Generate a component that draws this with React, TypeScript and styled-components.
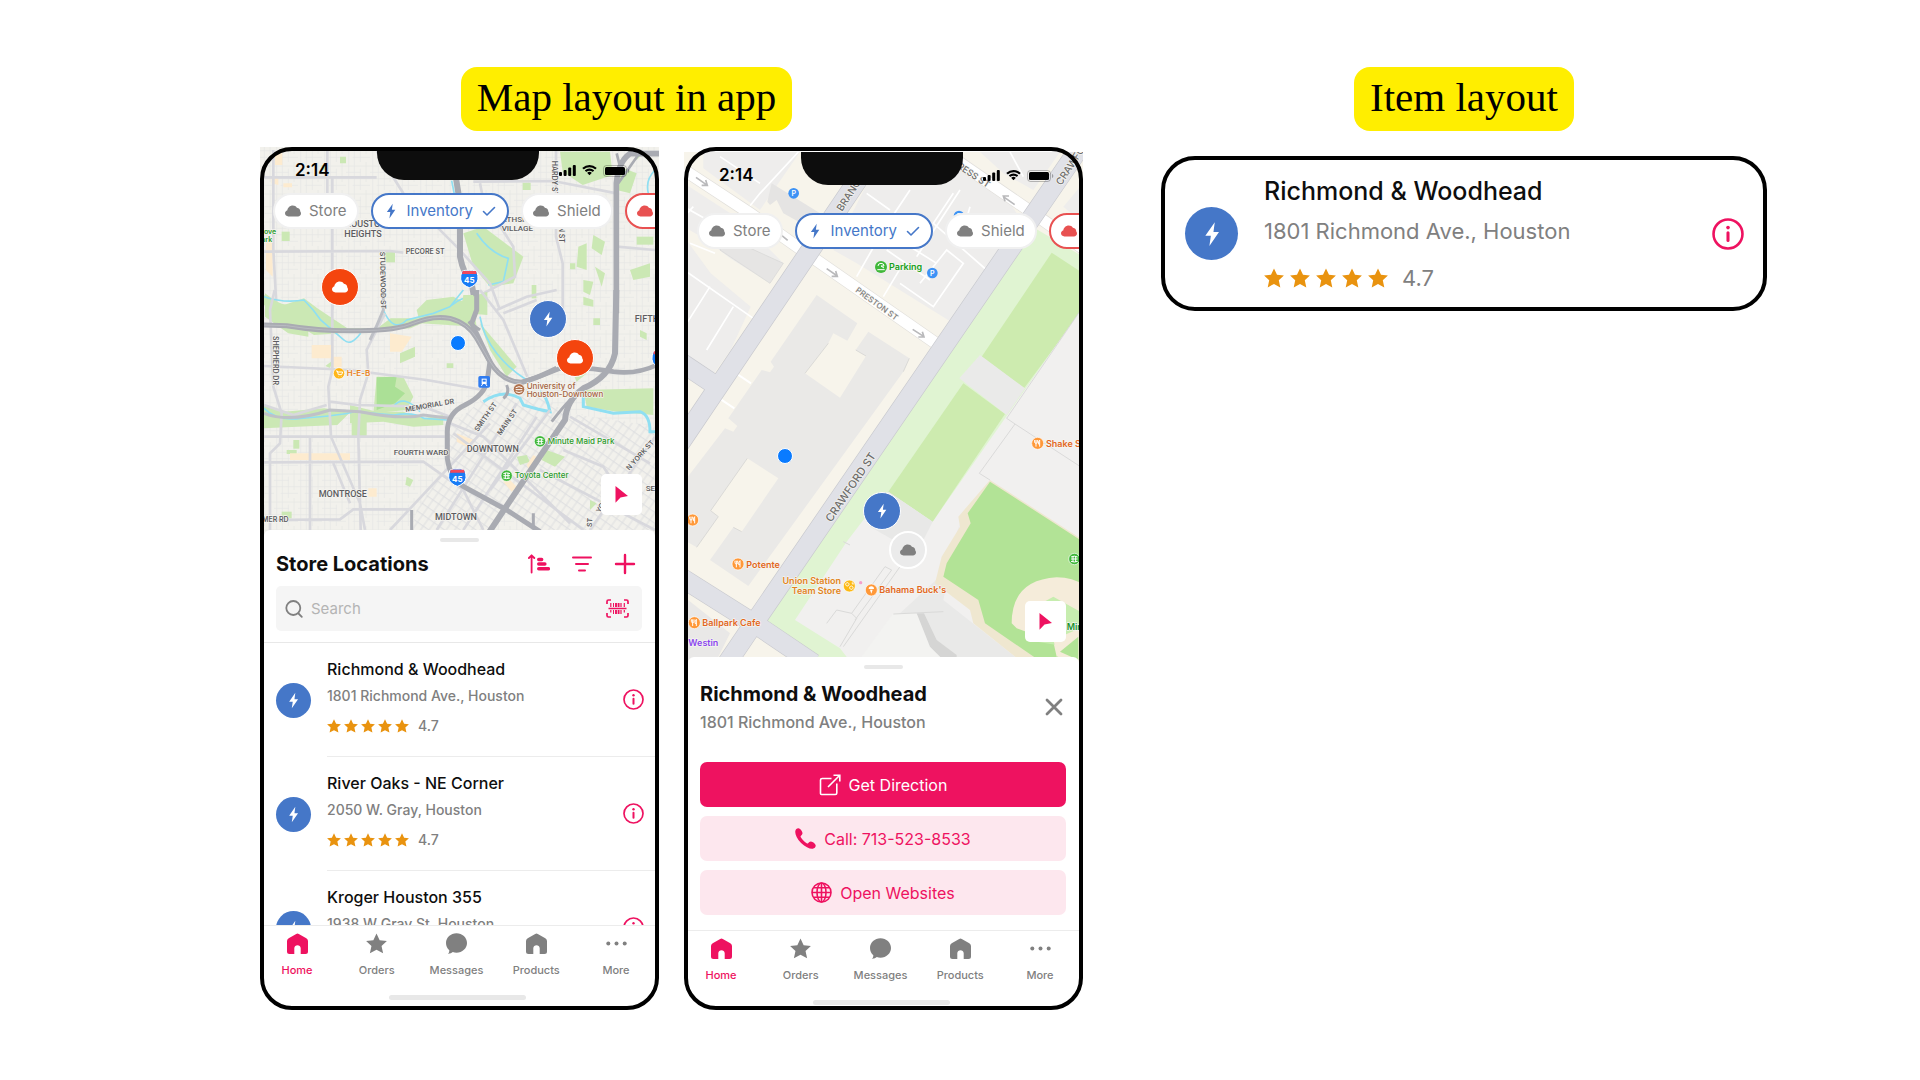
import React from "react";
import styled, { createGlobalStyle, css } from "styled-components";

const PINK = "#ee1260";
const BLUE = "#4577c8";
const RED = "#e85151";
const ORANGE = "#f4450e";
const GREY = "#808080";

const GlobalStyle = createGlobalStyle`
  *, *::before, *::after { box-sizing: border-box; }
  body {
    margin: 0;
    background: #fff;
    color: #0e0e0e;
    font-family: Inter, "Liberation Sans", sans-serif;
  }
  h1, h2, h3, p, ul { margin: 0; padding: 0; }
  ul { list-style: none; }
  button { border: 0; padding: 0; background: none; font: inherit; color: inherit; cursor: pointer; }
  a { color: inherit; text-decoration: none; }
  svg { display: block; flex: none; }
`;

/* ---------- page ---------- */

const Page = styled.main`
  display: grid;
  grid-template-columns: minmax(0, 823px) minmax(0, 606px);
  gap: 78px;
  justify-content: center;
  align-items: start;
  padding: 67px 0 69px 107px;
`;

const Group = styled.section<{ $gap: number; $shift?: number }>`
  display: flex;
  flex-direction: column;
  gap: ${(p) => p.$gap}px;

  > h1 { align-self: center; margin-right: ${(p) => p.$shift ?? 0}px; }
`;

const Tag = styled.h1`
  padding: 0 16px 4px;
  border-radius: 16px;
  background: #ffee00;
  color: #000;
  font: 400 41px/60px "Liberation Serif", "Times New Roman", serif;
  white-space: nowrap;
`;

const Phones = styled.div`
  display: flex;
  gap: 25px;
  align-items: stretch;
`;

const Phone = styled.article<{ $drop?: boolean }>`
  position: relative;
  flex: 1;
  min-width: 0;
  padding-top: ${(p) => (p.$drop ? 5 : 0)}px;

  &::after {
    content: "";
    position: absolute;
    inset: 0;
    border: 4px solid #000;
    border-radius: 32px;
    pointer-events: none;
  }
`;

/* ---------- map area ---------- */

const MapArea = styled.div<{ $height: number }>`
  position: relative;
  height: ${(p) => p.$height}px;
  overflow: hidden;

  > svg { position: absolute; inset: 0; width: 100%; height: 100%; }
`;

const StatusBar = styled.div`
  position: relative;
  display: flex;
  justify-content: space-between;
  padding: 0 29px 0 35px;
  height: 33px;
`;

const Time = styled.time`
  padding-top: 12px;
  font-size: 17px;
  line-height: 22px;
  font-weight: 600;
  color: #000;
`;

const Notch = styled.div`
  width: 162px;
  height: 33px;
  margin-left: 28px;
  border-radius: 0 0 27px 27px;
  background: #0d0d0d;
`;

const Indicators = styled.div`
  display: flex;
  align-items: center;
  gap: 6px;
  padding-top: 14px;
`;

const Chips = styled.div<{ $top: number }>`
  position: relative;
  display: flex;
  gap: 12px;
  margin-top: ${(p) => p.$top}px;
  padding-left: 13px;
  overflow: hidden;
`;

const Chip = styled.button<{ $tone: string; $edge: string }>`
  display: flex;
  flex: none;
  align-items: center;
  gap: 8px;
  height: 36px;
  padding: 0 10px;
  border: 2px solid ${(p) => p.$edge};
  border-radius: 18px;
  background: #fff;
  color: ${(p) => p.$tone};
  font-size: 15px;
  line-height: 20px;
  font-weight: 400;
`;

const Marker = styled.button<{ $x: number; $y: number; $fill: string; $ink?: string; $w?: number }>`
  position: absolute;
  left: ${(p) => p.$x}px;
  top: ${(p) => p.$y}px;
  display: grid;
  place-items: center;
  width: 38px;
  height: 38px;
  border: ${(p) => p.$w ?? 1}px solid #fff;
  border-radius: 50%;
  background: ${(p) => p.$fill};
  color: ${(p) => p.$ink ?? "#fff"};
  transform: translate(-50%, -50%);
`;

const UserDot = styled.span<{ $x: number; $y: number }>`
  position: absolute;
  left: ${(p) => p.$x}px;
  top: ${(p) => p.$y}px;
  width: 16px;
  height: 16px;
  border: 1px solid #fff;
  border-radius: 50%;
  background: #0a7bff;
  transform: translate(-50%, -50%);
`;

const Locate = styled.button`
  position: absolute;
  right: 17px;
  bottom: 21px;
  display: grid;
  place-items: center;
  width: 41px;
  height: 41px;
  border-radius: 5px;
  background: #fff;
`;

/* ---------- bottom sheet ---------- */

const Sheet = styled.div`
  position: relative;
  margin: -6px 4px 0;
  padding-top: 8px;
  border-radius: 6px 6px 0 0;
  background: #fff;
`;

const Handle = styled.div`
  width: 39px;
  height: 4px;
  margin: 0 auto;
  border-radius: 2px;
  background: #e8e8e8;
`;

const SheetHeader = styled.header`
  display: flex;
  align-items: center;
  justify-content: space-between;
  margin: 8px 0;
  padding: 0 19px 0 12px;
`;

const SheetTitle = styled.h2`
  font-size: 20px;
  line-height: 28px;
  font-weight: 700;
`;

const Tools = styled.div`
  display: flex;
  gap: 21px;
`;

const SearchBox = styled.label`
  display: flex;
  align-items: center;
  gap: 8px;
  height: 45px;
  margin: 0 13px 11px 12px;
  padding: 0 13px 0 9px;
  border-radius: 5px;
  background: #f5f5f5;
  color: ${GREY};
`;

const SearchInput = styled.input`
  flex: 1;
  min-width: 0;
  padding: 0;
  border: 0;
  outline: 0;
  background: none;
  font: 400 15px/20px Inter, sans-serif;

  &::placeholder { color: #b4b4b4; opacity: 1; }
`;

const StoreList = styled.ul`
  height: 283px;
  border-top: 1px solid #e8e8e8;
  overflow: hidden;
`;

/* ---------- store row, shared by the list and the stand-alone card ---------- */

const large = {
  title: css`font-size: 25px; line-height: 34px;`,
  address: css`margin-top: 8px; font-size: 22px; line-height: 30px;`,
  rating: css`margin-top: 18px; font-size: 22px; line-height: 28px; gap: 14px;`,
};
const small = {
  title: css`font-size: 16px; line-height: 24px;`,
  address: css`margin-top: 4px; font-size: 14px; line-height: 22px; font-weight: 500;`,
  rating: css`margin-top: 9px; font-size: 14px; line-height: 20px; font-weight: 500; gap: 9px;`,
};

const Row = styled.div<{ $large?: boolean }>`
  display: flex;
  align-items: center;
  gap: ${(p) => (p.$large ? 26 : 16)}px;
  padding-left: ${(p) => (p.$large ? 20 : 12)}px;
`;

const RowBody = styled.div<{ $large?: boolean }>`
  display: flex;
  flex: 1;
  align-items: center;
  justify-content: space-between;
  padding-right: ${(p) => (p.$large ? 19 : 11)}px;
  border-bottom: ${(p) => (p.$large ? "0" : "1px solid #ececec")};
`;

const RowText = styled.div<{ $large?: boolean }>`
  padding: ${(p) => (p.$large ? "14px 0 15px" : "14px 0 20px")};
`;

const Avatar = styled.span<{ $large?: boolean }>`
  display: grid;
  flex: none;
  place-items: center;
  width: ${(p) => (p.$large ? 53 : 35)}px;
  height: ${(p) => (p.$large ? 53 : 35)}px;
  border-radius: 50%;
  background: ${BLUE};
  color: #fff;
`;

const Name = styled.h3<{ $large?: boolean }>`
  font-weight: 500;
  ${(p) => (p.$large ? large.title : small.title)}
`;

const Address = styled.p<{ $large?: boolean }>`
  color: ${GREY};
  ${(p) => (p.$large ? large.address : small.address)}
`;

const Rating = styled.div<{ $large?: boolean }>`
  display: flex;
  align-items: center;
  color: ${GREY};
  ${(p) => (p.$large ? large.rating : small.rating)}
`;

const IconButton = styled.button<{ $tone?: string }>`
  display: grid;
  place-items: center;
  color: ${(p) => p.$tone ?? PINK};
`;

const ItemCard = styled.article`
  border: 4px solid #000;
  border-radius: 34px;
  background: #fff;
`;

/* ---------- detail sheet ---------- */

const DetailHeader = styled.header`
  display: flex;
  align-items: center;
  justify-content: space-between;
  margin-top: 11px;
  padding: 0 16px 0 12px;
`;

const DetailAddress = styled.p`
  margin-top: 2px;
  color: ${GREY};
  font-size: 16px;
  line-height: 24px;
  font-weight: 450;
`;

const Actions = styled.div`
  display: flex;
  flex-direction: column;
  gap: 9px;
  padding: 28px 13px 15px 12px;
`;

const Action = styled.a<{ $primary?: boolean }>`
  display: flex;
  align-items: center;
  justify-content: center;
  gap: 8px;
  height: 45px;
  border-radius: 7px;
  background: ${(p) => (p.$primary ? PINK : "#fde7ee")};
  color: ${(p) => (p.$primary ? "#fff" : PINK)};
  font-size: 16px;
  line-height: 20px;
  font-weight: 400;
`;

/* ---------- tab bar ---------- */

const TabBar = styled.nav<{ $end: number }>`
  position: relative;
  margin: 0 4px;
  padding: 0 5px ${(p) => p.$end}px 0;
  border-top: 1px solid #ececec;
  background: #fff;
`;

const Tabs = styled.div`
  display: flex;
  justify-content: space-between;
  margin: 0 -2px 0 -3px;
  padding-top: 7px;
`;

const Tab = styled.a<{ $active?: boolean }>`
  display: flex;
  flex-direction: column;
  align-items: center;
  gap: 9px;
  width: 72px;
  color: ${(p) => (p.$active ? PINK : GREY)};
  font-size: 11px;
  line-height: 14px;
  font-weight: 500;
`;

const HomeBar = styled.div`
  width: 137px;
  height: 5px;
  margin: 18px auto 0;
  border-radius: 3px;
  background: #e8e8e8;
`;

/* ---------- icons ---------- */

const Cloud = ({ size = 16 }: { size?: number }) => (
  <svg width={size} height={size} viewBox="0 0 16 16" fill="currentColor">
    <path d="M3.4 13.4C1.5 13.4 0 12 0 10.3 0 8.8 1 7.6 2.4 7.2 2.5 4.6 5 2.4 7.7 2.4c2 0 3.3.8 4.2 2.4 2.4.3 3.4 2 3.4 3.8.6.6.7 1.2.7 1.9 0 1.8-1.4 2.9-3 2.9z" />
  </svg>
);

const Bolt = ({ size = 16 }: { size?: number }) => (
  <svg width={size} height={size} viewBox="0 0 16 16" fill="currentColor">
    <path d="M9.7.8 3.9 9.1h3.4l-.9 6.3 5.9-8.6H8.9z" />
  </svg>
);

const Check = () => (
  <svg width="16" height="16" viewBox="0 0 16 16" fill="none" stroke="currentColor" strokeWidth="1.6" strokeLinecap="round" strokeLinejoin="round">
    <path d="M2.5 8.5 6 12l7.5-7.5" />
  </svg>
);

const Signal = () => (
  <svg width="17" height="11" viewBox="0 0 17 11" fill="#000">
    <rect x="0" y="7" width="3" height="4" rx="1" />
    <rect x="4.6" y="5" width="3" height="6" rx="1" />
    <rect x="9.2" y="2.5" width="3" height="8.5" rx="1" />
    <rect x="13.8" y="0" width="3" height="11" rx="1" />
  </svg>
);

const Wifi = () => (
  <svg width="15" height="11" viewBox="0 0 15 11" fill="#000">
    <path d="M7.5 2.2c2.1 0 4 .8 5.5 2.1.1.1.3.1.4 0l1.100-1.100c.1-.1.1-.3 0-.4a10.200 10.200 0 0 0-14 0c-.1.1-.1.3 0 .4l1.100 1.100c.1.1.3.1.4 0A8 8 0 0 1 7.5 2.2zm0 3.5c1.200 0 2.200.4 3 1.100.1.1.3.1.4 0L12 5.700c.1-.1.1-.3 0-.4a6.600 6.600 0 0 0-9 0c-.1.1-.1.3 0 .4l1.100 1.100c.1.1.3.1.4 0 .8-.7 1.900-1.100 3-1.100zm2.200 2.400c.1-.1.1-.3 0-.4a3.300 3.300 0 0 0-4.400 0c-.1.1-.1.3 0 .4l1.900 2c.2.2.4.2.6 0z" />
  </svg>
);

const Battery = () => (
  <svg width="27" height="12" viewBox="0 0 27 12">
    <rect x=".5" y=".5" width="23" height="11" rx="3" fill="none" stroke="#000" strokeOpacity=".25" />
    <rect x="2" y="2" width="20" height="8" rx="1.5" fill="#000" />
    <path d="M25 4v4c.8-.3 1.3-1.100 1.3-2S25.800 4.300 25 4z" fill="#000" fillOpacity=".3" />
  </svg>
);

const Arrow = () => (
  <svg width="17" height="17" viewBox="0 0 17 17" fill={PINK}>
    <path d="M2.500 0 15 10 7.500 11.400 2.500 16.800z" />
  </svg>
);

const SortIcon = () => (
  <svg width="22" height="22" viewBox="0 0 22 22" fill="none" stroke="currentColor" strokeLinecap="round" strokeLinejoin="round">
    <path d="M3.600 19.500V3M.9 5 3.600 2.300 6.300 5" strokeWidth="1.8" />
    <path d="M10.700 6.500h3M10.700 11h6.200M10.700 15.700h9.700" strokeWidth="3.400" />
  </svg>
);

const FilterIcon = () => (
  <svg width="22" height="22" viewBox="0 0 22 22" fill="none" stroke="currentColor" strokeWidth="2" strokeLinecap="round">
    <path d="M2 4.500h18M5 11h12M8 17.500h6" />
  </svg>
);

const PlusIcon = () => (
  <svg width="22" height="22" viewBox="0 0 22 22" fill="none" stroke="currentColor" strokeWidth="2.4" strokeLinecap="round">
    <path d="M11 2v18M2 11h18" />
  </svg>
);

const SearchIcon = () => (
  <svg width="18" height="18" viewBox="0 0 18 18" fill="none" stroke="currentColor" strokeWidth="1.8" strokeLinecap="round">
    <circle cx="8.3" cy="8" r="7" />
    <path d="m13.5 13.5 3.300 3.300" />
  </svg>
);

const ScanIcon = () => (
  <svg width="23" height="19" viewBox="0 0 23 19" fill="none" stroke="currentColor">
    <path d="M1 5V2.500Q1 1 2.500 1H5M18 1h2.500Q22 1 22 2.500V5M22 14v2.500q0 1.500-1.500 1.500H18M5 18H2.500Q1 18 1 16.500V14" strokeWidth="1.7" />
    <path d="M2.500 9.500h18" strokeWidth="1.5" />
    <path d="M4.800 4v4M4.800 11v2.500M15 4v4M15 11v4M18.300 4v4M18.300 11v2.500" strokeWidth="1.2" />
    <path d="M7.500 4v4M7.500 11v4" strokeWidth="1" />
    <path d="M10 4v4M10 11v4M12.600 4v4M12.600 11v4" strokeWidth="1.9" />
  </svg>
);

const InfoIcon = ({ size }: { size: number }) => (
  <svg width={size} height={size} viewBox="0 0 21 21" fill="none" stroke="currentColor" strokeLinecap="round">
    <circle cx="10.5" cy="10.5" r="9.5" strokeWidth="1.7" />
    <path d="M10.500 9.700v5" strokeWidth="2" />
    <circle cx="10.5" cy="6.3" r="1.2" fill="currentColor" stroke="none" />
  </svg>
);

const starPath = "M10 .4 13 6.800l6.900.8-5.100 4.700 1.500 7.100-6.300-3.500-6.300 3.500 1.500-7.100L.1 7.600 7 6.800z";

const Stars = ({ size, gap }: { size: number; gap: number }) => {
  const pitch = size + gap;
  return (
    <svg width={pitch * 5 - gap} height={size} role="img" aria-label="Five stars">
      {[0, 1, 2, 3, 4].map((i) => (
        <path key={i} d={starPath} fill="#e9930f" transform={`translate(${i * pitch} 0) scale(${size / 20})`} />
      ))}
    </svg>
  );
};

const CloseIcon = () => (
  <svg width="18" height="18" viewBox="0 0 18 18" stroke="currentColor" strokeWidth="2.8" strokeLinecap="round">
    <path d="m2 2 14 14M16 2 2 16" />
  </svg>
);

const OpenIcon = () => (
  <svg width="22" height="22" viewBox="0 0 22 22" fill="none" stroke="currentColor" strokeWidth="1.6">
    <path d="M12.500 4.500H3.200Q1.500 4.500 1.500 6v13.500q0 1 1 1h13.800q1.500 0 1.500-1.500V9.500M9 13 20.500 1.500M14.500 1.200h6.300v6.300" />
  </svg>
);

const PhoneIcon = () => (
  <svg width="21" height="21" viewBox="0 0 21 21" fill="currentColor">
    <path d="M.3 3.200C.5 1.600 2 .2 3.400.3c1 .1 2.200 1.100 3.300 2.700.9 1.500 1.100 2.700.2 3.700L5.800 7.900c-.3.400-.3.9 0 1.400 1.500 2.500 3.400 4.400 5.900 5.900.5.3 1 .3 1.400 0l1.200-1.100c1-.9 2.200-.7 3.700.2 1.600 1.100 2.600 2.300 2.700 3.300.1 1.400-1.300 2.900-2.900 3.100-2.800.4-7.300-1.300-11.700-5.700S-.1 6 .3 3.200z" />
  </svg>
);

const GlobeIcon = () => (
  <svg width="21" height="21" viewBox="0 0 21 21" fill="none" stroke="currentColor" strokeWidth="1.6">
    <circle cx="10.5" cy="10.5" r="9.5" />
    <ellipse cx="10.5" cy="10.5" rx="4.5" ry="9.500" />
    <path d="M10.500 1v19M1 10.500h19M2.500 5.700h16M2.500 15.300h16" />
  </svg>
);

const HouseIcon = () => (
  <svg width="21" height="21" viewBox="0 0 21 21" fill="currentColor">
    <path d="M9.200.9Q10.500 0 11.800.9l7.500 4.300Q21 6.300 21 8v10.500Q21 21 18.500 21h-4.800v-5.700c0-4-6.400-4-6.400 0V21H2.500Q0 21 0 18.500V8Q0 6.300 1.700 5.200z" />
  </svg>
);

const StarIcon = () => (
  <svg width="21" height="21" viewBox="0 0 20 20" fill="currentColor">
    <path d={starPath} />
  </svg>
);

const ChatIcon = () => (
  <svg width="21" height="21" viewBox="0 0 21 21" fill="currentColor">
    <path d="M10.500.2C16.300.2 21 4.600 21 10s-4.700 9.700-10.500 9.700q-2 0-3.700-.6-1.700 1.800-4.800 1.700 1.500-1.500 1.300-3.600A9.500 9.500 0 0 1 0 10C0 4.600 4.700.2 10.500.2z" />
  </svg>
);

const MoreIcon = () => (
  <svg width="21" height="21" viewBox="0 0 21 21" fill="currentColor">
    <circle cx="2.3" cy="10.5" r="2" />
    <circle cx="10.5" cy="10.5" r="2" />
    <circle cx="18.7" cy="10.5" r="2" />
  </svg>
);

/* ---------- maps ---------- */

type LabelProps = { x: number; y: number; size?: number; turn?: number; fill?: string; weight?: number; end?: boolean; face?: string; children: React.ReactNode };

const MapLabel = ({ x, y, size = 24, turn = 0, fill = "#5c5c60", weight = 600, end, face = "Inter, sans-serif", children }: LabelProps) => (
  <text
    transform={`translate(${x} ${y}) rotate(${turn})`}
    fontFamily={face}
    fontSize={size}
    fontWeight={weight}
    fill={fill}
    stroke="#f6f5f1"
    strokeWidth="4"
    strokeLinejoin="round"
    paintOrder="stroke"
    textAnchor={end ? "end" : "start"}
  >
    {children}
  </text>
);

const District = (p: LabelProps) => <MapLabel size={30} weight={500} face="Roboto, sans-serif" {...p} />;

const Interstate = ({ x, y }: { x: number; y: number }) => (
  <g transform={`translate(${x} ${y})`}>
    <path d="M-22-22Q-10-27 0-25 10-27 22-22 32 5 18 17 8 25 0 27-8 25-18 17-32 5-22-22z" fill="#1a7cf5" stroke="#fff" strokeWidth="3" />
    <path d="M-20-23h40l2 9h-44z" fill="#f2485b" />
    <text y="13" textAnchor="middle" fontFamily="Inter, sans-serif" fontSize="24" fontWeight="700" fill="#fff">45</text>
  </g>
);

const Food = ({ x, y }: { x: number; y: number }) => (
  <g transform={`translate(${x} ${y})`}>
    <circle r="18" fill="#ff9838" stroke="#fff" strokeWidth="2" />
    <path d="M-5-10v20M-9-10v6q0 4 4 4t4-4v-6M6 10v-20q-5 3-4 12h4" fill="none" stroke="#fff" strokeWidth="3" />
  </g>
);

const Venue = ({ x, y }: { x: number; y: number }) => (
  <g transform={`translate(${x} ${y})`}>
    <circle r="17" fill="#3fb83a" stroke="#fff" strokeWidth="2" />
    <path d="M-10-6q10-5 20 0M-10 0H10M-10 7q10 4 20 0M-4-9V9M4-9V9" fill="none" stroke="#fff" strokeWidth="3" />
  </g>
);

const ParkingSpot = ({ x, y }: { x: number; y: number }) => (
  <g transform={`translate(${x} ${y})`}>
    <circle r="16" fill="#3d92f5" />
    <text y="8" textAnchor="middle" fontFamily="Inter, sans-serif" fontSize="21" fontWeight="600" fill="#fff">P</text>
  </g>
);

const parks = [
  "M930 305h150l8 70-90 30-60-40z", "M1110 350l50 20-20 60-40-10z", "M640 550l60-20 80 60 40 30-30 80-70 10-50-60z",
  "M500 780l30-30 80-10 60 30 10 60-170-10z", "M985 590l25-10 0 80-30-10z", "M1030 555l35 20-10 40-30-20z", "M1035 650l30 20-10 40z",
  "M845 705h14v40h-14z", "M818 398h24v22h-24z", "M405 605h30v32h-30z", "M45 730l40 30 60 10 30 30 0 60-60-10-70-50z", "M95 545h24v28h-24z",
  "M1160 560l50 0 0 24-50 0z", "M1140 660l60-20 0 40-50 10z", "M270 320h18v20h-18zM215 345h20v14h-20z", "M1150 300l30 10-20 20zM1000 690l30 5-10 40-20-10zM960 640l16 0 0 18-16 0z",
];
const lowerParks = [
  "M42 15l60 30 60-20 40 30 90 60 90 0 40-30 110 0 120-60 60-20 0 70-120-10-110 50-150 10-140 10-150-90z",
  "M380 260l80 0 30 60-20 40-100 10z", "M300 345l80 20 80 0 60 20 60-10 0 30-90 5-90-15-100 5z", "M42 345l60 20 120-10 80 10-40 40-120 5-100 5z",
  "M305 380h45v62h-45z", "M1000 300l210-5 0 80-110-10-90-15z", "M690 100l60 70 50 60-30 30-50-80z", "M450 190l45-20 0 30-45 20z",
  "M890 480l55 20-30 30-40-20z", "M130 450h18v26h-18z", "M110 480l30 0 0 12-30 0z", "M800 500l30-5 10 20-30 10z", "M640 15l30 0 0 75-40-10z",
  "M960 230l50 20-30 25z", "M470 560l20 10-10 20-14-6z", "M1020 630l20 10-20 20z", "M95 665l30 0 0 20-30 0z",
  "M1000 20l30 10 0 20-30-5zM1030 85l20 0 0 20-20 0zM590 220l20 0 0 14-20 0zM250 210l-10 24-14-6zM1170 120l20 10 0 20-20-10z",
];

const HoustonMap = () => (
  <svg viewBox="30 291 1197 1167" preserveAspectRatio="xMidYMin slice" aria-hidden="true">
    <defs>
      <pattern id="blocks" width="72" height="84" patternUnits="userSpaceOnUse">
        <rect width="72" height="84" fill="#f2f1ec" />
        <path d="M8 0V84M25 0V84M43 20V84M60 0V60M0 12H72M0 31H45M0 50H72M20 70H72" stroke="#e5e5e4" strokeWidth="2" fill="none" />
      </pattern>
      <pattern id="downtown" width="42" height="54" patternUnits="userSpaceOnUse" patternTransform="rotate(35)">
        <rect width="42" height="54" fill="#f2f1ec" />
        <path d="M6 0V54M27 0V54M0 8H42M0 35H42" stroke="#dedfe1" strokeWidth="3" fill="none" />
      </pattern>
    </defs>
    <rect x="30" y="291" width="1197" height="1170" fill="url(#blocks)" />
    <path d="M600 1130 720 1030 820 1000 950 1090 760 1380 700 1460H480L500 1380 590 1250z" fill="url(#downtown)" />
    <path d="M950 1090 1227 1130V1460H870L770 1380z" fill="url(#downtown)" />
    <g fill="#cbe8b4">{parks.map((d) => <path key={d} d={d} />)}</g>
    <g fill="#fdebcf">
      <path d="M48 560l20 10 0 110-20-20zM75 310h22v35h-22zM100 400h26v12h-26zM65 380l20 5 0 20-20-5z" />
    </g>
    <g fill="none" stroke="#8fdff2" strokeWidth="5">
      <path d="M680 550q40 60 95 75l-15 70-45 10M590 780q50-50 75-30M70 780q70-20 110 20M1215 360q-30 30-20 70M605 392l8 40" />
    </g>
    <g fill="none" stroke="#d8d8dd" strokeWidth="8">
      <path d="M42 382H380M42 605 420 603 460 608M70 300V600L80 780M232 300V430M247 380V780M380 303 460 430 620 590 720 700 750 780M670 395 910 393 1100 430M690 400 700 450 790 590 795 680 700 730M918 300V560L938 640V780M740 780 830 740 920 720M1215 600 1100 590" />
    </g>
    <g fill="none" stroke="#a9abb2">
      <path d="M618 385 630 460V620Q640 670 665 700L680 790" strokeWidth="18" />
      <path d="M1227 311 1140 311Q1105 335 1099 400V790" strokeWidth="17" />
      <path d="M1175 300 1105 400M1100 310 1115 370" strokeWidth="8" />
    </g>
    <g transform="translate(0 720)">
      <g fill="#cbe8b4">{lowerParks.map((d) => <path key={d} d={d} />)}</g>
      <path d="M380 262l60-2-5 30 30 20-30 30-55 20z" fill="#abe096" />
      <path d="M420 130l65 10-30 45-35 0zM185 165h65v40h-65zM245 200h30v32h-30zM120 490h180v20h-180zM620 430l50 20-20 20-30-15zM830 525l20-30 15 10-25 40zM355 595h25v25h-25zM770 560l30 30-15 15-25-30z" fill="#fdebcf" />
      <g fill="none" stroke="#8fdff2" strokeWidth="5">
        <path d="M42 20q60 20 120 10 30 30 50 60l70 60q20 20 50-20M400 60q30 70 70 30l80-20 50-20 40-50M690 80q10 60 50 110t90 80M42 355q40 40 110 30 130-10 160-20l120 10q60-10 90 10l70 5M430 350q30-40 80 15" />
        <path d="M700 335q60-40 110-10l10 20q50 15 80 20-10-50-30-60M1000 300v50l90 20 80-5q30 10 30 60h20" strokeWidth="9" />
      </g>
      <g fill="none" stroke="#d8d8dd" strokeWidth="8">
        <path d="M247 0V240L235 290 243 440 330 640 345 720M74 0 60 60 70 290 95 370 90 460 60 490V720M42 228 300 240 530 270 700 300M42 440H590M42 517 520 515 640 600 700 720M180 440V720M250 520 300 640M690 0 760 90 832 260M760 70 860 30M405 70 350 180 355 250 330 330 325 440 332 720M240 335 320 345 520 350 600 380M42 345 130 375 230 345M600 400 700 440 960 700M610 430 840 600 1000 720M420 720 720 400M560 720 800 340M640 720 860 380M720 600 900 360M960 380 1200 520M870 540 1215 720M1215 440 1020 720M42 690 270 688 310 658H480M940 480 1060 530 1120 620" />
      </g>
      <path d="M42 370Q120 400 240 360L330 365Q460 390 520 375L600 385M400 0V60Q380 110 360 150" fill="none" stroke="#bfc1c7" strokeWidth="9" />
      <g fill="none" stroke="#a9abb2">
        <path d="M42 105 110 107Q220 125 330 122 440 122 490 100 550 75 600 85 655 100 680 145L720 215Q755 275 815 277 850 270 920 235" strokeWidth="15" />
        <path d="M815 277Q870 260 930 235 1010 230 1090 245 1160 255 1227 222" strokeWidth="14" />
        <path d="M680 0V60L665 100 720 215 712 270Q705 315 645 345 590 370 592 430V505Q600 570 650 595L770 660 870 725" strokeWidth="15" />
        <path d="M1099 0 1095 190Q1080 260 1000 295 950 330 945 390L890 470 775 640 715 730" strokeWidth="18" />
        <path d="M770 285Q780 310 760 325M905 395Q940 350 960 330M485 660V720M850 670V715M655 95 690 120" strokeWidth="9" />
      </g>
      <path d="M42 105 110 107Q220 125 330 122 440 122 490 100 550 75 600 85 655 100 680 145L720 215Q755 275 815 277" fill="none" stroke="#b9bbc1" strokeWidth="3" />

      <MapLabel x={70} y={138} size={21} turn={90}>SHEPHERD DR</MapLabel>
      <MapLabel x={467} y={366} size={21} turn={-10}>MEMORIAL DR</MapLabel>
      <MapLabel x={684} y={426} size={21} turn={-55}>SMITH ST</MapLabel>
      <MapLabel x={752} y={437} size={21} turn={-55}>MAIN ST</MapLabel>
      <MapLabel x={1138} y={542} size={21} turn={-48}>N YORK ST</MapLabel>
      <MapLabel x={1050} y={670} size={21} turn={-60}>YORK</MapLabel>
      <MapLabel x={1025} y={712} size={21} turn={-85}>ST</MapLabel>
      <MapLabel x={36} y={696} size={21}>MER RD</MapLabel>
      <District x={1154} y={95} size={27}>FIFTH</District>
      <District x={650} y={485} size={27}>DOWNTOWN</District>
      <District x={431} y={495} size={24}>FOURTH WARD</District>
      <District x={206} y={620} size={27}>MONTROSE</District>
      <District x={555} y={690} size={27}>MIDTOWN</District>
      <District x={1187} y={602} size={24}>SE</District>
      <circle cx="267" cy="250" r="17" fill="#ffb617" stroke="#fff" strokeWidth="2" />
      <path d="M258 243h4l3 11h10l3-8h-14M266 259v1M274 259v1" fill="none" stroke="#fff" strokeWidth="3" />
      <MapLabel x={290} y={258} fill="#e8821c">H-E-B</MapLabel>
      <circle cx="807" cy="298" r="17" fill="#ae6f4a" stroke="#fff" strokeWidth="2" />
      <path d="M797 293q10-6 20 0M797 299h20M797 305q10 5 20 0" fill="none" stroke="#fff" strokeWidth="3" />
      <MapLabel x={830} y={296} weight={500} fill="#a4633d">University of</MapLabel>
      <MapLabel x={830} y={321} weight={500} fill="#a4633d">Houston-Downtown</MapLabel>
      <rect x="685" y="258" width="35" height="35" rx="5" fill="#2f7cf0" />
      <path d="M695 266h15v16h-15z" fill="#fff" />
      <path d="M697 272h11M698 282l-4 6M707 282l4 6" fill="none" stroke="#fff" strokeWidth="3" />
      <path d="M698 269h9v6h-9z" fill="#2f7cf0" />
      <Venue x={870} y={454} />
      <MapLabel x={893} y={463} weight={500} fill="#2a9a2a">Minute Maid Park</MapLabel>
      <Venue x={770} y={557} />
      <MapLabel x={794} y={565} weight={500} fill="#2a9a2a">Toyota Center</MapLabel>
      <Interstate x={622} y={562} />
      <Interstate x={1232} y={207} />
    </g>
    <MapLabel x={906} y={332} size={21} turn={90}>HARDY ST</MapLabel>
    <MapLabel x={926} y={530} size={21} turn={90}>N ST</MapLabel>
    <MapLabel x={467} y={612} size={21}>PECORE ST</MapLabel>
    <MapLabel x={390} y={605} size={21} turn={89}>STUDEWOOD ST</MapLabel>
    <District x={284} y={530} size={27}>HOUSTON</District>
    <District x={283} y={562} size={27}>HEIGHTS</District>
    <District x={722} y={515} size={24}>NORTHSIDE</District>
    <District x={755} y={542} size={24}>VILLAGE</District>
    <MapLabel x={34} y={552} size={21} fill="#2a9a2a">rove</MapLabel>
    <MapLabel x={34} y={577} size={21} fill="#2a9a2a">ark</MapLabel>
    <Interstate x={658} y={686} />
  </svg>
);

const StreetMap = () => (
  <svg viewBox="42 306 1197 1533" preserveAspectRatio="xMidYMin slice" aria-hidden="true">
    <rect x="42" y="306" width="1197" height="1540" fill="#f7f4eb" />
    <g fill="#eeedec">
      <path d="M100 306h290L270 480 100 355z" />
      <path d="M42 400l170 110L340 640l-40 60L180 625 110 570 42 530z" />
      <path d="M42 560l80 110 120 100-60 130-50 70L42 930z" />
      <path d="M640 306h230v40L1000 430 1060 520 950 690 850 820 560 640 490 600z" />
      <path d="M930 306h240L1090 420 1000 370z" />
      <path d="M1180 470 1239 400v120z" />
    </g>
    <path d="M305 400 450 490 430 540 340 490 320 450 300 465 292 455z" fill="#e5e4e3" />
    <path d="M165 560 340 640 300 700 150 600z" fill="#e6e5e4" stroke="#d7d6d5" strokeWidth="2" />
    <g fill="none" stroke="#fff" strokeWidth="5">
      <path d="M150 320 270 400M385 306 270 430 230 480M42 470 130 520M60 580 135 610M42 660 250 805M120 710 50 820M190 770 110 900M42 500 70 470M590 430 660 480M720 420 640 540 560 680M640 540 800 640M850 430 790 520 950 660M690 700 790 770 880 640 830 600 750 700M650 600 780 690M870 420 740 620M700 640 640 740M1020 306 1060 380M900 470 880 540" />
    </g>
    <g transform="translate(0 870)">
      <path d="M440-135 562-50 532 2 490-20 475 10 405 100 510 173 588 48 557 30 595-25 718 55 700 95 235 738 120 660 190 562 215 575 325 415 232 355 122 512 145 530 80 622 42 600V425L165 265 190 275 202 258 175 235 275 90 300 97 312 80 302 65z" fill="#eae9e7" />
      <path d="M232 355 122 512 145 530 80 622M475 10 405 100M557 30l31 18M190 562l25 13M718 55l-18 40" fill="none" stroke="#cfcecd" strokeWidth="2" />
      <path d="M42 770 180 880 140 960H42z" fill="#e9e8e7" />
      <path d="M195 98 243 130M148 175 193 205" stroke="#fff" strokeWidth="6" />
    </g>
    {/* park strip and ballpark */}
    <path d="M1095 535 1239 620V1840H430L280 1725z" fill="#e0f4d2" />
    <g transform="translate(0 870)">
      <path d="M1145-262 1239-200V-100L1170 0 1062 145 935 50z" fill="#cdebaf" />
      <path d="M1239-100 788 545 655 455 580 540 530 605 375 840 510 925 545 970H1239z" fill="#f1f0ef" />
      <path d="M880 130 1005 222 788 545 655 455z" fill="#cdebaf" />
      <path d="M930 45 1065 145 1010 225 868 115z" fill="#eaeae9" />
      <path d="M655 455 788 545 740 640 600 560z" fill="#e8e8e7" />
      <path d="M870 550 820 700 690 820 670 825 580 950 545 970H1060L820 780z" fill="#e9e9e8" />
      <path d="M670 820 560 970H840L740 820z" fill="#f3f3f1" />
      <path d="M740 820h22L800 900 860 945V970H830L780 920z" fill="#d5d5d4" />
      <path d="M645 680 545 820 560 835 510 920M545 820 500 810 470 850M670 822 820 815M645 680l20 10-110 150M520 605l20 10M690 680 520 920" fill="none" stroke="#dadad9" strokeWidth="3" />
      <path d="M960 420 1239 600V970H1060L910 850 900 810 795 730 815 650 870 560 865 530z" fill="#efe7d0" />
      <path d="M960 425 1239 605V970H1120L945 850 925 780 820 710 830 670 902 550 893 520z" fill="#b2e396" />
      <path d="M1025 850Q1025 720 1160 712 1210 712 1239 735V940L1160 950 1150 905 1040 865z" fill="#f5ecda" />
      <path d="M1095 800 1150 770 1239 820V880L1160 915 1070 900z" fill="#c7edaf" />
      <path d="M1150 900 1239 860V970H1170z" fill="#f5ecda" />
      <path d="M1170 935 1225 890V960z" fill="#b2e396" />
      <path d="M1239-100 1010 235 1035 252 928 400 960 420M1035 252 1239 385" fill="none" stroke="#cfcfce" strokeWidth="2" />
    </g>
    {/* streets */}
    <g fill="none" strokeLinecap="butt">
      <path d="M42 360 240 490 410 610 805 885" stroke="#e2e0dc" strokeWidth="38" />
      <path d="M850 325 1090 490 1239 595" stroke="#e2e0dc" strokeWidth="38" />
      <path d="M42 360 240 490 410 610 805 885" stroke="#fff" strokeWidth="34" />
      <path d="M850 325 1090 490 1239 595" stroke="#fff" strokeWidth="34" />
      <path d="M620 306 30 1180M1245 270 262 1705 120 1915M30 1580 260 1725 430 1840M30 935 135 1005" stroke="#c9cacf" strokeWidth="60" />
      <path d="M620 306 30 1180M1245 270 262 1705 120 1915M30 1580 260 1725 430 1840M30 935 135 1005" stroke="#e0e1e7" strokeWidth="56" />
      <g stroke="#b9b9bb" strokeWidth="5">
        <path d="M78 382 112 406M95 406h17l-5-16M470 656 502 678M485 679h17l-5-16M728 838 762 860M745 861h17l-5-16M335 556l18 15M1034 464 1000 440M1017 438h-17l5 16" />
      </g>
    </g>
    <MapLabel x={516} y={486} size={30} turn={-57} weight={500} fill="#6d6d6d">BRANCH</MapLabel>
    <MapLabel x={830} y={332} size={27} turn={34} weight={500} fill="#6d6d6d">YPRESS ST</MapLabel>
    <MapLabel x={1174} y={408} size={30} turn={-57} weight={500} fill="#6d6d6d">CRAWFORD</MapLabel>
    <MapLabel x={555} y={724} size={24} turn={36} weight={500} fill="#7b7b7b">PRESTON ST</MapLabel>
    <ParkingSpot x={371} y={430} />
    <ParkingSpot x={867} y={498} />
    <ParkingSpot x={787} y={669} />
    <circle cx="633" cy="651" r="18" fill="#3fb83a" />
    <path d="M624 648q0-8 9-8t9 8h-9l9 6M622 659h22" fill="none" stroke="#fff" strokeWidth="3" />
    <MapLabel x={657} y={661} size={27} fill="#17a01b">Parking</MapLabel>
    <g transform="translate(0 870)">
      <MapLabel x={484} y={548} size={33} turn={-56} weight={500} fill="#6d6d6d">CRAWFORD ST</MapLabel>
      <Food x={1103} y={310} />
      <MapLabel x={1128} y={320} size={27} fill="#e2671d">Shake Shack</MapLabel>
      <Food x={68} y={540} />
      <Food x={204} y={672} />
      <MapLabel x={229} y={683} size={27} fill="#e2671d">Potente</MapLabel>
      <MapLabel x={513} y={733} size={27} fill="#e2841d" end>Union Station</MapLabel>
      <MapLabel x={513} y={761} size={27} fill="#e2841d" end>Team Store</MapLabel>
      <circle cx="538" cy="738" r="18" fill="#fdb913" stroke="#fff" strokeWidth="2" />
      <path d="M532 728a5 5 0 1 0 .1 0M544 738a5 5 0 1 0 .1 0M545 729h4v5" fill="none" stroke="#fff" strokeWidth="3" />
      <circle cx="572" cy="728" r="5" fill="#f4a0cc" />
      <circle cx="604" cy="750" r="18" fill="#ff9838" stroke="#fff" strokeWidth="2" />
      <path d="M596 747q0-8 8-8t8 8zM600 749h8l-4 12z" fill="#fff" />
      <MapLabel x={628} y={760} size={27} fill="#e2671d">Bahama Buck's</MapLabel>
      <Food x={73} y={848} />
      <MapLabel x={97} y={857} size={27} fill="#e2671d">Ballpark Cafe</MapLabel>
      <MapLabel x={55} y={918} size={27} fill="#8a45ee">Westin</MapLabel>
      <Venue x={1213} y={657} />
      <MapLabel x={1190} y={870} size={27} fill="#17902a">Minute</MapLabel>
    </g>
  </svg>
);

/* ---------- composed parts ---------- */

const PhoneTop = ({ chipsTop }: { chipsTop: number }) => (
  <>
    <StatusBar>
      <Time>2:14</Time>
      <Notch />
      <Indicators>
        <Signal />
        <Wifi />
        <Battery />
      </Indicators>
    </StatusBar>
    <Chips $top={chipsTop}>
      <Chip type="button" $tone={GREY} $edge="#f0f0f0"><Cloud />Store</Chip>
      <Chip type="button" $tone={BLUE} $edge={BLUE} aria-pressed="true"><Bolt />Inventory<Check /></Chip>
      <Chip type="button" $tone={GREY} $edge="#f0f0f0"><Cloud />Shield</Chip>
      <Chip type="button" $tone={RED} $edge={RED} aria-label="Alerts"><Cloud /><Cloud /></Chip>
    </Chips>
  </>
);

const tabs = [
  { name: "Home", icon: <HouseIcon /> },
  { name: "Orders", icon: <StarIcon /> },
  { name: "Messages", icon: <ChatIcon /> },
  { name: "Products", icon: <HouseIcon /> },
  { name: "More", icon: <MoreIcon /> },
];

const BottomBar = ({ end }: { end: number }) => (
  <TabBar $end={end}>
    <Tabs>
      {tabs.map((t, i) => (
        <Tab key={t.name} href="#" $active={i === 0}>{t.icon}{t.name}</Tab>
      ))}
    </Tabs>
    <HomeBar />
  </TabBar>
);

type Store = { name: string; address: string; score: string };

const stores: Store[] = [
  { name: "Richmond & Woodhead", address: "1801 Richmond Ave., Houston", score: "4.7" },
  { name: "River Oaks - NE Corner", address: "2050 W. Gray, Houston", score: "4.7" },
  { name: "Kroger Houston 355", address: "1938 W Gray St, Houston", score: "4.7" },
];

const StoreRow = ({ store, big }: { store: Store; big?: boolean }) => (
  <Row $large={big}>
    <Avatar $large={big}><Bolt size={big ? 26 : 17} /></Avatar>
    <RowBody $large={big}>
      <RowText $large={big}>
        <Name $large={big}>{store.name}</Name>
        <Address $large={big}>{store.address}</Address>
        <Rating $large={big}>
          <Stars size={big ? 20 : 14} gap={big ? 6 : 3} />
          {store.score}
        </Rating>
      </RowText>
      <IconButton type="button" aria-label="Details"><InfoIcon size={big ? 32 : 21} /></IconButton>
    </RowBody>
  </Row>
);

const ListPhone = () => (
  <Phone>
    <MapArea $height={389}>
      <HoustonMap />
      <PhoneTop chipsTop={13} />
      <UserDot $x={198} $y={196} />
      <Marker $x={80} $y={140} $fill={ORANGE} aria-label="Store"><Cloud /></Marker>
      <Marker $x={288} $y={172} $fill={BLUE} aria-label="Inventory"><Bolt /></Marker>
      <Marker $x={315} $y={211} $fill={ORANGE} aria-label="Store"><Cloud /></Marker>
      <Locate type="button" aria-label="My location"><Arrow /></Locate>
    </MapArea>
    <Sheet>
      <Handle />
      <SheetHeader>
        <SheetTitle>Store Locations</SheetTitle>
        <Tools>
          <IconButton type="button" aria-label="Sort"><SortIcon /></IconButton>
          <IconButton type="button" aria-label="Filter"><FilterIcon /></IconButton>
          <IconButton type="button" aria-label="Add"><PlusIcon /></IconButton>
        </Tools>
      </SheetHeader>
      <SearchBox>
        <SearchIcon />
        <SearchInput type="text" placeholder="Search" aria-label="Search" />
        <IconButton type="button" aria-label="Scan"><ScanIcon /></IconButton>
      </SearchBox>
      <StoreList>
        {stores.map((s) => (
          <li key={s.name}><StoreRow store={s} /></li>
        ))}
      </StoreList>
    </Sheet>
    <BottomBar end={10} />
  </Phone>
);

const DetailPhone = () => (
  <Phone $drop>
    <MapArea $height={511}>
      <StreetMap />
      <PhoneTop chipsTop={28} />
      <UserDot $x={101} $y={304} />
      <Marker $x={224} $y={398} $fill="#ebebeb" $ink={GREY} $w={2} aria-label="Shield"><Cloud /></Marker>
      <Marker $x={198} $y={359} $fill={BLUE} aria-label="Inventory"><Bolt /></Marker>
      <Locate type="button" aria-label="My location"><Arrow /></Locate>
    </MapArea>
    <Sheet>
      <Handle />
      <DetailHeader>
        <div>
          <SheetTitle>{stores[0].name}</SheetTitle>
          <DetailAddress>{stores[0].address}</DetailAddress>
        </div>
        <IconButton type="button" $tone={GREY} aria-label="Close"><CloseIcon /></IconButton>
      </DetailHeader>
      <Actions>
        <Action href="#" $primary><OpenIcon />Get Direction</Action>
        <Action href="#"><PhoneIcon />Call: 713-523-8533</Action>
        <Action href="#"><GlobeIcon />Open Websites</Action>
      </Actions>
    </Sheet>
    <BottomBar end={4} />
  </Phone>
);

export default function App() {
  return (
    <>
      <GlobalStyle />
      <Page>
        <Group $gap={16} $shift={90}>
          <Tag>Map layout in app</Tag>
          <Phones>
            <ListPhone />
            <DetailPhone />
          </Phones>
        </Group>
        <Group $gap={25}>
          <Tag>Item layout</Tag>
          <ItemCard>
            <StoreRow store={stores[0]} big />
          </ItemCard>
        </Group>
      </Page>
    </>
  );
}
